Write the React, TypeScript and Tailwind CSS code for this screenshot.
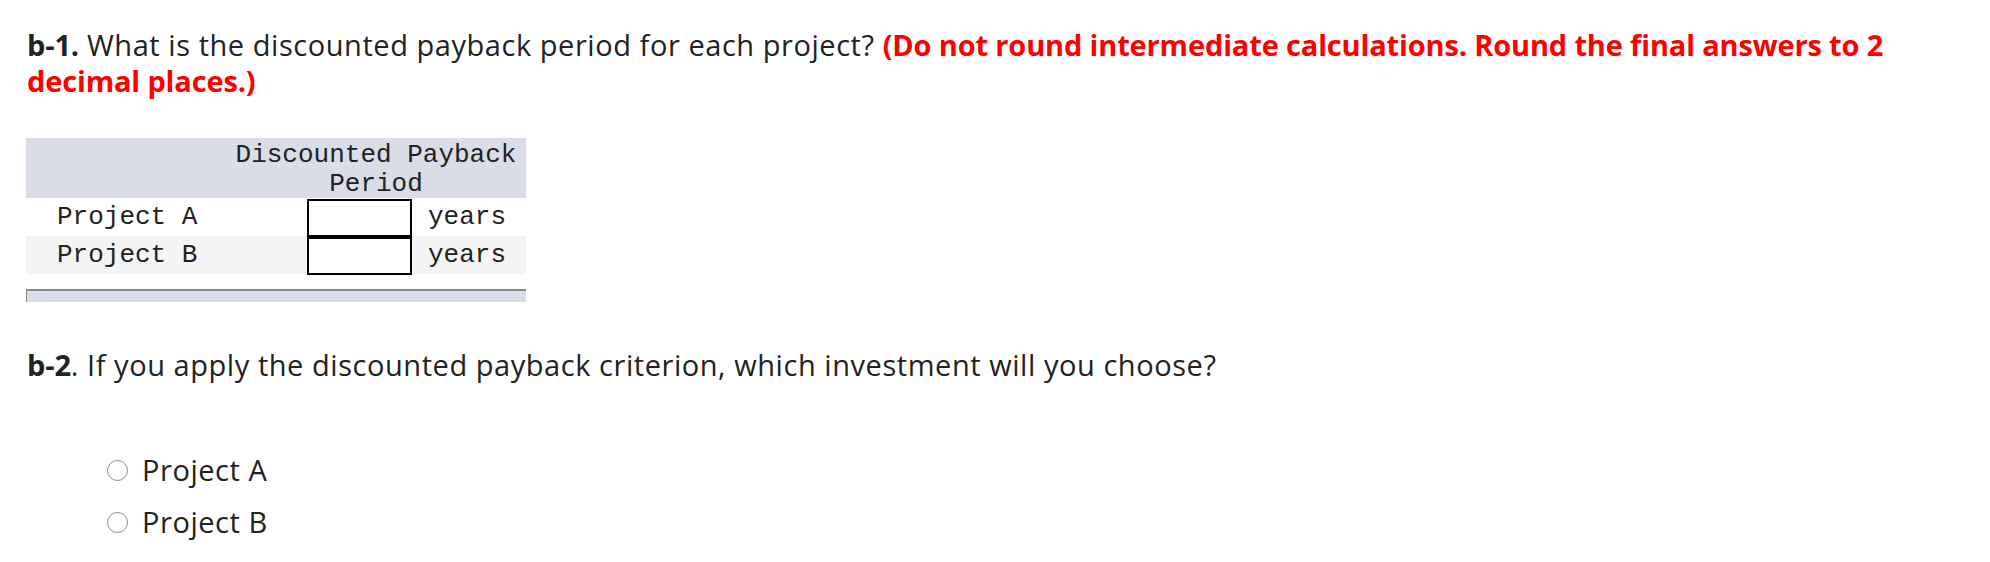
import React from "react";

const projects = ["Project A", "Project B"];

const App: React.FC = () => {
  return (
    <div className="w-[1990px] h-[562px] bg-white text-[#222222] font-['Open_Sans',sans-serif] px-[27px] pt-[27px]">
      {/* question b-1 */}
      <p className="text-[29px] leading-[36px] tracking-[0.55px] w-[1880px]">
        <span className="font-bold tracking-[-0.15px]">b-1.</span> What is the
        discounted payback period for each project?{" "}
        <span className="font-bold tracking-[-0.15px] text-[#ff0000]">
          (Do not round intermediate calculations. Round the final answers to 2
          decimal places.)
        </span>
      </p>

      {/* answer table */}
      <div className="mt-[39px] -ml-[1px] w-[500px] font-['Liberation_Mono',monospace] text-[26px] text-[#222222]">
        <div className="flex h-[60px] bg-[#d9dde8] pt-[3px] leading-[29px]">
          <div className="w-[200px]" />
          <div className="flex-1 text-center">
            Discounted Payback
            <br />
            Period
          </div>
        </div>
        {projects.map((p, i) => (
          <div
            key={p}
            className={`grid grid-cols-[281px_105px_114px] h-[38px] items-center ${
              i % 2 === 1 ? "bg-[#f4f4f4]" : "bg-white"
            }`}
          >
            <div className="pl-[31px]">{p}</div>
            <input
              type="text"
              className="h-[38px] w-[105px] border-2 border-black bg-white outline-none"
            />
            <div className="pl-[16px]">years</div>
          </div>
        ))}
        <div className="mt-[15px] h-[13px] border-t-2 border-l border-[#8a8a8a] bg-[#d9dde8]" />
      </div>

      {/* question b-2 */}
      <p className="mt-[45px] text-[29px] leading-[36px] tracking-[0.55px]">
        <span className="font-bold tracking-[-0.15px]">b-2</span>. If you apply
        the discounted payback criterion, which investment will you choose?
      </p>

      <div className="mt-[61px] pl-[80px] flex flex-col">
        {projects.map((p) => (
          <label
            key={p}
            className="flex items-center gap-[14px] h-[52px] text-[29px] tracking-[0.55px]"
          >
            <span className="w-[21px] h-[21px] rounded-full border-[1.5px] border-[#8a8a8a] bg-white" />
            {p}
          </label>
        ))}
      </div>
    </div>
  );
};

export default App;
